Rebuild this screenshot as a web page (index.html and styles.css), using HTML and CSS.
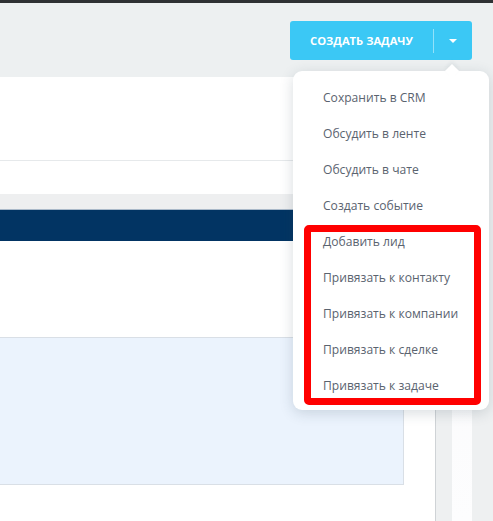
FILE: index.html
```html
<!DOCTYPE html>
<html lang="ru">
<head>
<meta charset="utf-8">
<link rel="stylesheet" href="styles.css">
</head>
<body>
<div class="topbar"></div>
<div class="header">
  <div class="btn">
    <span class="btn-main">СОЗДАТЬ ЗАДАЧУ</span>
    <span class="btn-sep"></span>
    <span class="btn-arrow"><span class="tri"></span></span>
  </div>
</div>
<div class="content">
  <div class="panel">
    <div class="sec1"></div>
    <div class="sec2"></div>
    <div class="band"></div>
    <div class="navy"></div>
    <div class="sec3"></div>
    <div class="bluebox"></div>
  </div>
  <div class="gutter"></div>
  <div class="strip"></div>
  <div class="rest"></div>
</div>

<div class="menu">
  <div class="pointer"></div>
  <ul class="items">
    <li>Сохранить в CRM</li>
    <li>Обсудить в ленте</li>
    <li>Обсудить в чате</li>
    <li>Создать событие</li>
    <li>Добавить лид</li>
    <li>Привязать к контакту</li>
    <li>Привязать к компании</li>
    <li>Привязать к сделке</li>
    <li>Привязать к задаче</li>
  </ul>
</div>
<div class="highlight"></div>
</body>
</html>
```
FILE: styles.css
```css
* { box-sizing: border-box; }
html, body { margin: 0; padding: 0; }
body {
  width: 493px;
  height: 521px;
  overflow: hidden;
  background: #edf0f1;
  font-family: "Open Sans", "Liberation Sans", sans-serif;
  position: relative;
}
.topbar { height: 3px; background: #2f3134; }
.header {
  height: 74px;
  display: flex;
  justify-content: flex-end;
  align-items: flex-start;
  padding: 18px 21px 0 0;
}
.btn {
  width: 182px;
  height: 39px;
  background: #3bc8f5;
  border-radius: 3px;
  display: flex;
  align-items: center;
  color: #fff;
}
.btn-main {
  width: 143px;
  text-align: center;
  font-size: 11.2px;
  font-weight: 700;
}
.btn-sep {
  width: 1px;
  height: 24px;
  background: rgba(255,255,255,0.45);
}
.btn-arrow {
  flex: 1;
  display: flex;
  justify-content: center;
  align-items: center;
}
.tri {
  width: 0; height: 0;
  border-left: 4px solid transparent;
  border-right: 4px solid transparent;
  border-top: 4px solid #fff;
}
.content {
  display: flex;
  height: 444px;
}
.panel {
  width: 436px;
  background: #fff;
  border-right: 1px solid #cfd3d6;
}
.sec1 { height: 84px; border-bottom: 1px solid #e6e9eb; }
.sec2 { height: 33px; }
.band { height: 16px; background: #eeeff0; border-bottom: 1px solid #aab9c9; }
.navy { height: 31px; background: #023463; }
.sec3 { height: 96px; }
.bluebox {
  width: 404px;
  height: 148px;
  background: #ebf3fd;
  border: 1px solid #d9dfe6;
  border-left: none;
}
.gutter { width: 16px; background: #eef0f1; }
.strip { width: 20px; background: linear-gradient(#f7f8f9, #fdfdfe); }
.rest { flex: 1; background: #eef0f1; }

.menu {
  position: absolute;
  left: 293px;
  top: 71px;
  width: 196px;
  height: 339px;
  background: #fff;
  border-radius: 9px;
  box-shadow: 0 3px 14px rgba(40,60,80,0.18);
}
.pointer {
  position: absolute;
  left: 154px;
  top: -5px;
  width: 10px;
  height: 10px;
  background: #fff;
  transform: rotate(45deg);
  box-shadow: -2px -2px 4px rgba(40,60,80,0.06);
}
.items {
  list-style: none;
  margin: 0;
  padding: 9px 0 6px 0;
  position: relative;
}
.items li {
  height: 36px;
  line-height: 36px;
  padding-left: 30px;
  font-size: 12.1px;
  color: #5a636f;
  white-space: nowrap;
}
.highlight {
  position: absolute;
  left: 304px;
  top: 225px;
  width: 177px;
  height: 180px;
  border: 7px solid #ff0000;
  border-radius: 5px;
}
```
